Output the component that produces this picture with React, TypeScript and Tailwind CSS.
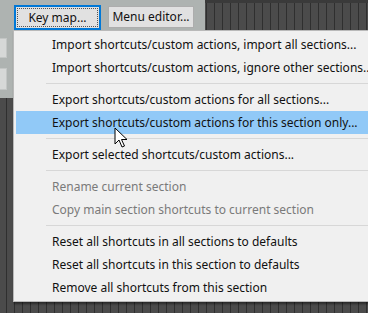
const stripes =
  'bg-[#474747] bg-[repeating-linear-gradient(90deg,#4b4b4b_0px,#4b4b4b_6px,#2f2f2f_6px,#2f2f2f_7px,#4b4b4b_7px,#4b4b4b_8px)]'

type Item = { label: string; disabled?: boolean; active?: boolean } | 'sep'

const items: Item[] = [
  { label: 'Import shortcuts/custom actions, import all sections...' },
  { label: 'Import shortcuts/custom actions, ignore other sections...' },
  'sep',
  { label: 'Export shortcuts/custom actions for all sections...' },
  { label: 'Export shortcuts/custom actions for this section only...', active: true },
  'sep',
  { label: 'Export selected shortcuts/custom actions...' },
  'sep',
  { label: 'Rename current section', disabled: true },
  { label: 'Copy main section shortcuts to current section', disabled: true },
  'sep',
  { label: 'Reset all shortcuts in all sections to defaults' },
  { label: 'Reset all shortcuts in this section to defaults' },
  { label: 'Remove all shortcuts from this section' },
]

function Cursor() {
  return (
    <svg width="14" height="22" viewBox="0 0 14 22" className="absolute left-[114px] top-[127px]">
      <path
        d="M1 1 L1 17 L5 13 L8 20 L10.5 19 L7.5 12.5 L13 12.5 Z"
        fill="#fff"
        stroke="#000"
        strokeWidth="1"
        strokeLinejoin="miter"
      />
    </svg>
  )
}

export default function App() {
  return (
    <div className={`relative w-[368px] h-[313px] overflow-hidden font-['Segoe_UI','Noto_Sans',sans-serif] text-[12px] ${stripes}`}>
      {/* ── toolbar row ── */}
      <div className="flex h-[30px]">
        <div className="w-[205px] bg-[#aeb3b1] flex items-start pt-[5px] pl-[14px] gap-[7px]">
          <div className="w-[87px] h-[25px] border-2 border-[#0078d7] bg-[#e1e1e1] p-[1px]">
            <div className="h-full border border-dotted border-[#555] flex items-center justify-center text-[#111]">
              Key map...
            </div>
          </div>
          <div className="mt-[1px] w-[86px] h-[22px] border border-[#adadad] bg-[#e1e1e1] flex items-center justify-center text-[#111]">
            Menu editor...
          </div>
        </div>
        <div className="flex-1 border-t-[3px] border-[#3a3a3a]" />
      </div>

      {/* ── left strip under the menu ── */}
      <div className="w-[13px] h-[68px] bg-[#aeb3b1] flex flex-col pt-[8px] gap-[10px]">
        <div className="w-[7px] h-[20px] bg-[#d6d8d7] border border-l-0 border-[#c3c6c5]" />
        <div className="w-[7px] h-[22px] bg-[#d6d8d7] border border-l-0 border-[#c3c6c5]" />
      </div>

      {/* ── dropdown menu ── */}
      <div className="absolute left-[13px] top-[30px] w-[360px] bg-[#f0f0f0] border border-[#b9b9b9] py-[2px] shadow-[1px_2px_2px_rgba(0,0,0,0.45)]">
        {items.map((it, i) =>
          it === 'sep' ? (
            <div key={i} className="h-[9px] flex items-center pl-[32px]">
              <div className="h-px w-full bg-[#d7d7d7]" />
            </div>
          ) : (
            <div
              key={i}
              className={`h-[23px] flex items-center pl-[36px] ml-[2px] whitespace-nowrap ${
                it.active ? 'bg-[#91c9f7]' : ''
              } ${it.disabled ? 'text-[#7a7a7a]' : 'text-[#111]'}`}
            >
              {it.label}
            </div>
          )
        )}
      </div>

      <Cursor />
    </div>
  )
}
